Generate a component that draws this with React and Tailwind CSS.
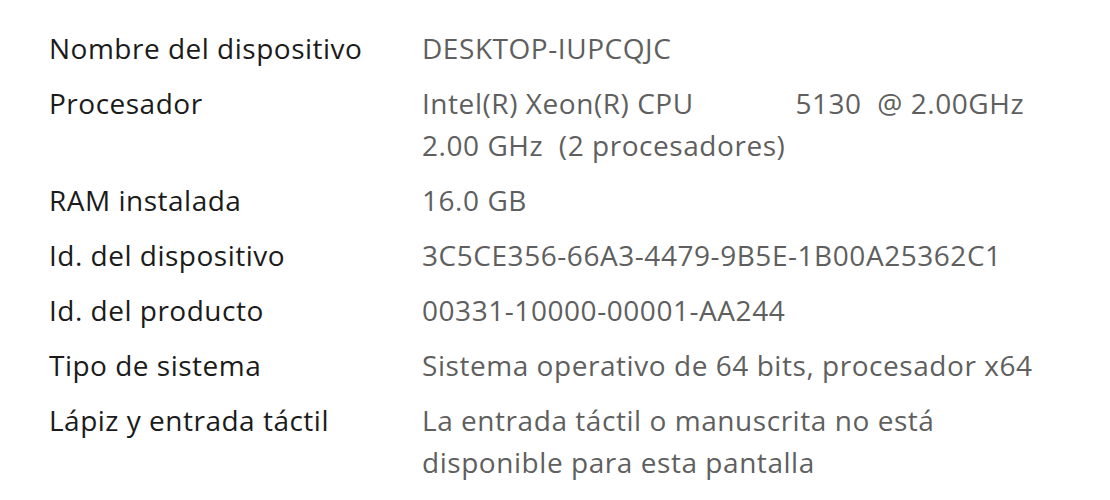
export default function App() {
  const rows = [
    ["Nombre del dispositivo", ["DESKTOP-IUPCQJC"]],
    ["Procesador", ["Intel(R) Xeon(R) CPU             5130  @ 2.00GHz", "2.00 GHz  (2 procesadores)"]],
    ["RAM instalada", ["16.0 GB"]],
    ["Id. del dispositivo", ["3C5CE356-66A3-4479-9B5E-1B00A25362C1"]],
    ["Id. del producto", ["00331-10000-00001-AA244"]],
    ["Tipo de sistema", ["Sistema operativo de 64 bits, procesador x64"]],
    ["Lápiz y entrada táctil", ["La entrada táctil o manuscrita no está", "disponible para esta pantalla"]],
  ];
  return (
    <div className="w-[1110px] h-[500px] bg-white overflow-hidden pt-[27px] pl-[49px]" style={{ fontFamily: '"Open Sans", "Noto Sans", sans-serif' }}>
      <div className="flex flex-col gap-[13px]">
        {rows.map(([label, vals]) => (
          <div key={label} className="flex text-[28px] leading-[42px]">
            <div className="w-[373px] shrink-0 text-[#1b1b1b] tracking-[0.5px]">{label}</div>
            <div className="text-[#5f5f5f] whitespace-pre tracking-[0.55px]">
              {vals.map((v) => (
                <div key={v}>{v}</div>
              ))}
            </div>
          </div>
        ))}
      </div>
    </div>
  );
}
